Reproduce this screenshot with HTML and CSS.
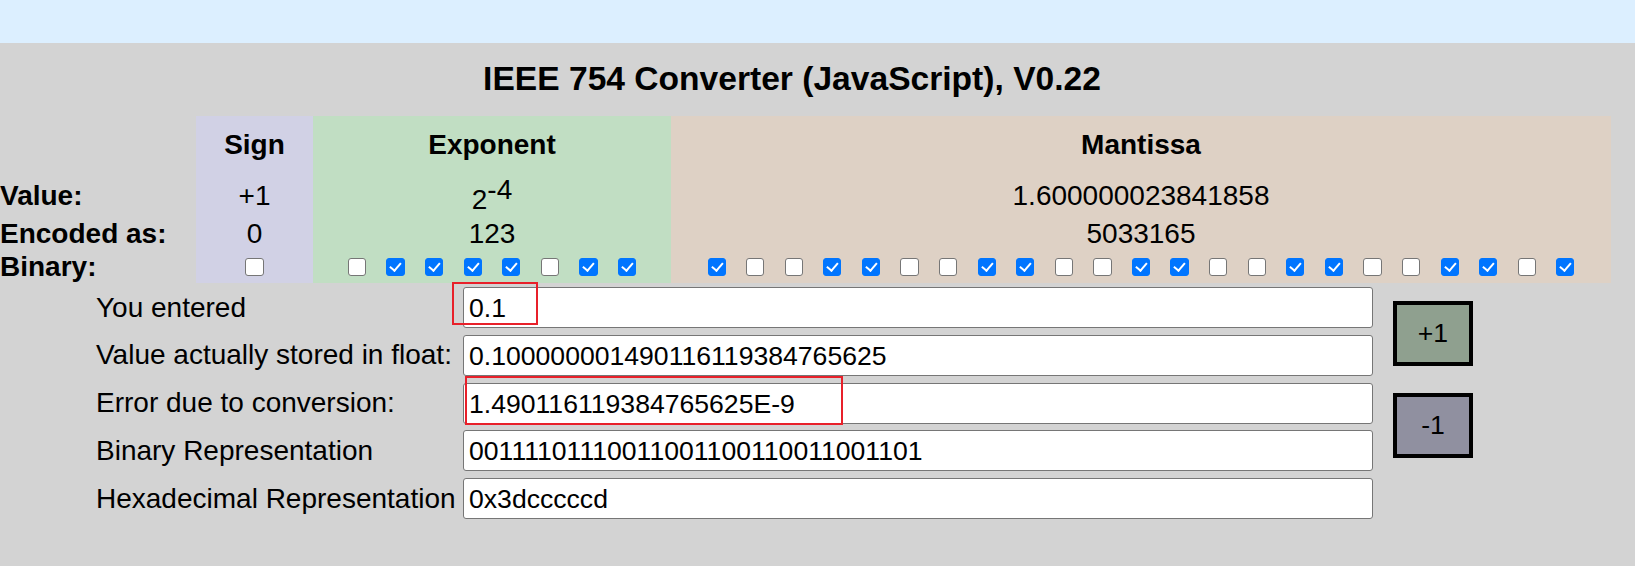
FILE: index.html
```html
<!DOCTYPE html>
<html lang="en">
<head>
<meta charset="utf-8">
<title>IEEE 754 Converter</title>
<link rel="stylesheet" href="styles.css">
</head>
<body>
<div class="topbar"></div>
<main class="page">
  <h1 class="title">IEEE 754 Converter (JavaScript), V0.22</h1>

  <div class="bits">
    <div class="cell lbl head"></div>
    <div class="cell sign head">Sign</div>
    <div class="cell exp head">Exponent</div>
    <div class="cell man head">Mantissa</div>

    <div class="cell lbl val">Value:</div>
    <div class="cell sign val">+1</div>
    <div class="cell exp val"><span class="pow">2<sup>-4</sup></span></div>
    <div class="cell man val">1.600000023841858</div>

    <div class="cell lbl enc">Encoded as:</div>
    <div class="cell sign enc">0</div>
    <div class="cell exp enc">123</div>
    <div class="cell man enc">5033165</div>

    <div class="cell lbl bin">Binary:</div>
    <div class="cell sign bin boxes">
      <input type="checkbox" class="cb">
    </div>
    <div class="cell exp bin boxes">
      <input type="checkbox" class="cb">
      <input type="checkbox" class="cb" checked>
      <input type="checkbox" class="cb" checked>
      <input type="checkbox" class="cb" checked>
      <input type="checkbox" class="cb" checked>
      <input type="checkbox" class="cb">
      <input type="checkbox" class="cb" checked>
      <input type="checkbox" class="cb" checked>
    </div>
    <div class="cell man bin boxes">
      <input type="checkbox" class="cb" checked>
      <input type="checkbox" class="cb">
      <input type="checkbox" class="cb">
      <input type="checkbox" class="cb" checked>
      <input type="checkbox" class="cb" checked>
      <input type="checkbox" class="cb">
      <input type="checkbox" class="cb">
      <input type="checkbox" class="cb" checked>
      <input type="checkbox" class="cb" checked>
      <input type="checkbox" class="cb">
      <input type="checkbox" class="cb">
      <input type="checkbox" class="cb" checked>
      <input type="checkbox" class="cb" checked>
      <input type="checkbox" class="cb">
      <input type="checkbox" class="cb">
      <input type="checkbox" class="cb" checked>
      <input type="checkbox" class="cb" checked>
      <input type="checkbox" class="cb">
      <input type="checkbox" class="cb">
      <input type="checkbox" class="cb" checked>
      <input type="checkbox" class="cb" checked>
      <input type="checkbox" class="cb">
      <input type="checkbox" class="cb" checked>
    </div>
  </div>

  <div class="fields">
    <label class="flabel r1">You entered</label>
    <input class="finput r1" type="text" value="0.1">
    <label class="flabel r2">Value actually stored in float:</label>
    <input class="finput r2" type="text" value="0.100000001490116119384765625">
    <label class="flabel r3">Error due to conversion:</label>
    <input class="finput r3" type="text" value="1.490116119384765625E-9">
    <label class="flabel r4">Binary Representation</label>
    <input class="finput r4" type="text" value="00111101110011001100110011001101">
    <label class="flabel r5">Hexadecimal Representation</label>
    <input class="finput r5" type="text" value="0x3dcccccd">
    <button class="btn plus" type="button">+1</button>
    <button class="btn minus" type="button">-1</button>
  </div>

  <div class="mark mark-entered"></div>
  <div class="mark mark-error"></div>
</main>
</body>
</html>
```

FILE: styles.css
```css
* { box-sizing: border-box; }

html, body {
  margin: 0;
  padding: 0;
  background: #d3d3d3;
  font-family: "Liberation Sans", Arial, sans-serif;
  color: #000;
}

.topbar {
  height: 43px;
  background: #dcefff;
}

.page {
  position: relative;
  height: 523px;
  padding-top: 16px;
}

.title {
  width: 1584px;
  margin: 0;
  height: 57px;
  line-height: 40px;
  font-size: 33.6px;
  font-weight: bold;
  text-align: center;
}

.bits {
  display: grid;
  grid-template-columns: 196px 117px 358px 940px;
  grid-template-rows: 54px 48px 32px 33px;
  font-size: 28px;
  line-height: 32px;
}

.cell {
  display: flex;
  align-items: center;
  justify-content: center;
  white-space: nowrap;
}

.cell.lbl {
  justify-content: flex-start;
  font-weight: bold;
}

.sign { background: #d1d1e5; }
.exp  { background: #c1dec3; }
.man  { background: #ded1c5; }
.cell.lbl { background: transparent; }

.head { font-weight: bold; padding-top: 4px; }
.val { padding-top: 4px; }

.pow {
  display: inline-block;
  line-height: 32px;
}

.pow sup {
  font-size: 1em;
  line-height: 1;
  vertical-align: super;
}

.boxes {
  gap: 20.4px;
  padding-top: 1px;
}

.cb {
  -webkit-appearance: none;
  appearance: none;
  position: relative;
  width: 18.2px;
  height: 18.2px;
  margin: 0;
  flex: none;
  background: #fff;
  border: 1.5px solid #767676;
  border-radius: 3px;
}

.cb:checked {
  background: #0075ff;
  border-color: #0075ff;
}

.cb:checked::after {
  content: "";
  position: absolute;
  left: 5px;
  top: 1.5px;
  width: 4.5px;
  height: 9px;
  border-right: 2.8px solid #fff;
  border-bottom: 2.8px solid #fff;
  transform: rotate(40deg);
}

.fields {
  margin-top: 4px;
  padding-left: 96px;
  display: grid;
  grid-template-columns: 367px 910px 20px 80px;
  grid-template-rows: repeat(5, 41px);
  row-gap: 6.8px;
}

.flabel {
  grid-column: 1;
  align-self: center;
  font-size: 28px;
  line-height: 32px;
  white-space: nowrap;
}

.finput {
  grid-column: 2;
  height: 41px;
  width: 100%;
  margin: 0;
  padding: 2px 5px 0;
  border: 1px solid #767676;
  border-radius: 3px;
  background: #fff;
  font-family: "Liberation Sans", Arial, sans-serif;
  font-size: 26.6px;
  color: #000;
}

.r1 { grid-row: 1; }
.r2 { grid-row: 2; }
.r3 { grid-row: 3; }
.r4 { grid-row: 4; }
.r5 { grid-row: 5; }

.btn {
  grid-column: 4;
  align-self: center;
  width: 80px;
  height: 65px;
  margin: 0;
  padding: 0;
  border: 4px solid #000;
  border-radius: 0;
  font-family: "Liberation Sans", Arial, sans-serif;
  font-size: 26.6px;
  color: #000;
}

.plus  { grid-row: 1 / span 2; background: #8fa08f; margin-top: 4px; }
.minus { grid-row: 3 / span 2; background: #9090a0; margin-bottom: 3px; }

.mark {
  position: absolute;
  border: 2px solid #e8202a;
}

.mark-entered {
  left: 452px;
  top: 239px;
  width: 86px;
  height: 43px;
}

.mark-error {
  left: 465px;
  top: 333px;
  width: 378px;
  height: 49px;
}
```
